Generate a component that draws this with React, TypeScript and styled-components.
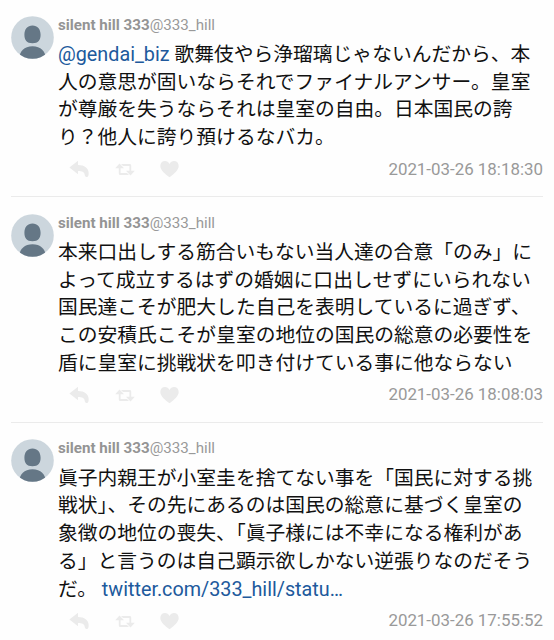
import React from "react";
import styled, { createGlobalStyle } from "styled-components";

const GlobalStyle = createGlobalStyle`
  body {
    margin: 0;
    background: #fefefe;
    font-family: Roboto, "Noto Sans CJK JP", sans-serif;
    overflow: hidden;
  }
`;

const Feed = styled.main`
  display: flex;
  flex-direction: column;
  height: 640px;
  overflow: hidden;
  padding: 0 11px;
  box-sizing: border-box;
`;

const Tweet = styled.article`
  display: grid;
  grid-template-columns: 43px 1fr;
  column-gap: 4px;
  flex: none;
  padding: 15.7px 0 14.4px;
  border-bottom: 1px solid #ebebeb;

  & + & {
    padding-top: 16.7px;
  }
`;

const Avatar = styled.svg`
  display: block;
  width: 43px;
  height: 43px;
`;

const Content = styled.div`
  min-width: 0;
`;

const Author = styled.header`
  height: 25.2px;
  line-height: 19px;
  font-size: 15.15px;
  color: #999;
  white-space: nowrap;
`;

const Name = styled.strong`
  font-weight: 700;
  color: #949494;
`;

const Body = styled.p`
  margin: 0;
  font-size: 19.77px;
  line-height: 27.75px;
  color: #111;
`;

const Line = styled.span`
  display: block;
  height: 27.75px;
  white-space: nowrap;
`;

const Link = styled.a`
  color: #20599c;
`;

const Footer = styled.footer`
  display: flex;
  align-items: center;
  justify-content: space-between;
  height: 29.7px;
  padding-left: 11px;
`;

const Actions = styled.div`
  display: flex;
  gap: 25.5px;
  padding-top: 5px;
`;

const Icon = styled.svg`
  display: block;
  width: 20px;
  height: 18px;
  fill: #ebebeb;
`;

const Time = styled.time`
  padding-top: 4px;
  font-size: 16.9px;
  line-height: 20px;
  color: #999;
  white-space: nowrap;
`;

type TweetData = { time: string; lines: React.ReactNode[] };

const tweets: TweetData[] = [
  {
    time: "2021-03-26 18:18:30",
    lines: [
      <><Link>@gendai_biz</Link> 歌舞伎やら浄瑠璃じゃないんだから、本</>,
      "人の意思が固いならそれでファイナルアンサー。皇室",
      "が尊厳を失うならそれは皇室の自由。日本国民の誇",
      "り？他人に誇り預けるなバカ。",
    ],
  },
  {
    time: "2021-03-26 18:08:03",
    lines: [
      "本来口出しする筋合いもない当人達の合意「のみ」に",
      "よって成立するはずの婚姻に口出しせずにいられない",
      "国民達こそが肥大した自己を表明しているに過ぎず、",
      "この安積氏こそが皇室の地位の国民の総意の必要性を",
      "盾に皇室に挑戦状を叩き付けている事に他ならない",
    ],
  },
  {
    time: "2021-03-26 17:55:52",
    lines: [
      "眞子内親王が小室圭を捨てない事を「国民に対する挑",
      "戦状」、その先にあるのは国民の総意に基づく皇室の",
      "象徴の地位の喪失、「眞子様には不幸になる権利があ",
      "る」と言うのは自己顕示欲しかない逆張りなのだそう",
      <>だ。 <Link>twitter.com/333_hill/statu…</Link></>,
    ],
  },
];

function TweetItem({ time, lines }: TweetData) {
  return (
    <Tweet>
      <Avatar viewBox="0 0 43 43">
        <defs>
          <clipPath id="avatar-circle">
            <circle cx="21.5" cy="21.5" r="21.3" />
          </clipPath>
        </defs>
        <g clipPath="url(#avatar-circle)">
          <rect width="43" height="43" fill="#ccd6dd" />
          <path
            d="M21.5 9.5c5 0 8.100 3.600 8.100 9.200 0 5.300-2.300 8.500-8.100 8.500s-8.100-3.200-8.100-8.500c0-5.600 3.100-9.200 8.100-9.200z"
            fill="#657786"
          />
          <path d="M8 43c.5-8 5.200-12.800 13.500-12.800S34.500 35 35 43z" fill="#657786" />
        </g>
      </Avatar>
      <Content>
        <Author>
          <Name>silent hill 333</Name>@333_hill
        </Author>
        <Body>
          {lines.map((line, i) => (
            <Line key={i}>{line}</Line>
          ))}
        </Body>
        <Footer>
          <Actions>
            <Icon viewBox="0 0 20 18">
              <path d="M0.400 7.500 9 .8v4.200c6.500 0 10.700 3.200 10.700 8.200 0 1.500-.4 3.800-1.700 3.800-1.200 0-2-.6-2.200-1.800-.3-2.800-2.300-4.100-6.800-4.100V14.300z" />
            </Icon>
            <Icon viewBox="0 0 20 18">
              <path d="M4.500 3.600 9 8.200H5.600v4.800h6.400l2 2H5.300c-.9 0-1.500-.6-1.500-1.500V8.200H.2zM15.500 15.400 11 10.800h3.400V6H8L6 4h8.700c.9 0 1.500.6 1.500 1.500v5.300h3.600z" />
            </Icon>
            <Icon viewBox="0 0 20 18">
              <path d="M9.500 17.200C5 13.600.3 10.300.3 5.900.3 3 2.300 1 5 1c2 0 3.600 1.100 4.500 2.900C10.400 2.100 12 1 14 1c2.700 0 4.700 2 4.700 4.900 0 4.400-4.700 7.700-9.200 11.300z" />
            </Icon>
          </Actions>
          <Time>{time}</Time>
        </Footer>
      </Content>
    </Tweet>
  );
}

export default function App() {
  return (
    <>
      <GlobalStyle />
      <Feed>
        {tweets.map((tweet) => (
          <TweetItem key={tweet.time} {...tweet} />
        ))}
      </Feed>
    </>
  );
}
